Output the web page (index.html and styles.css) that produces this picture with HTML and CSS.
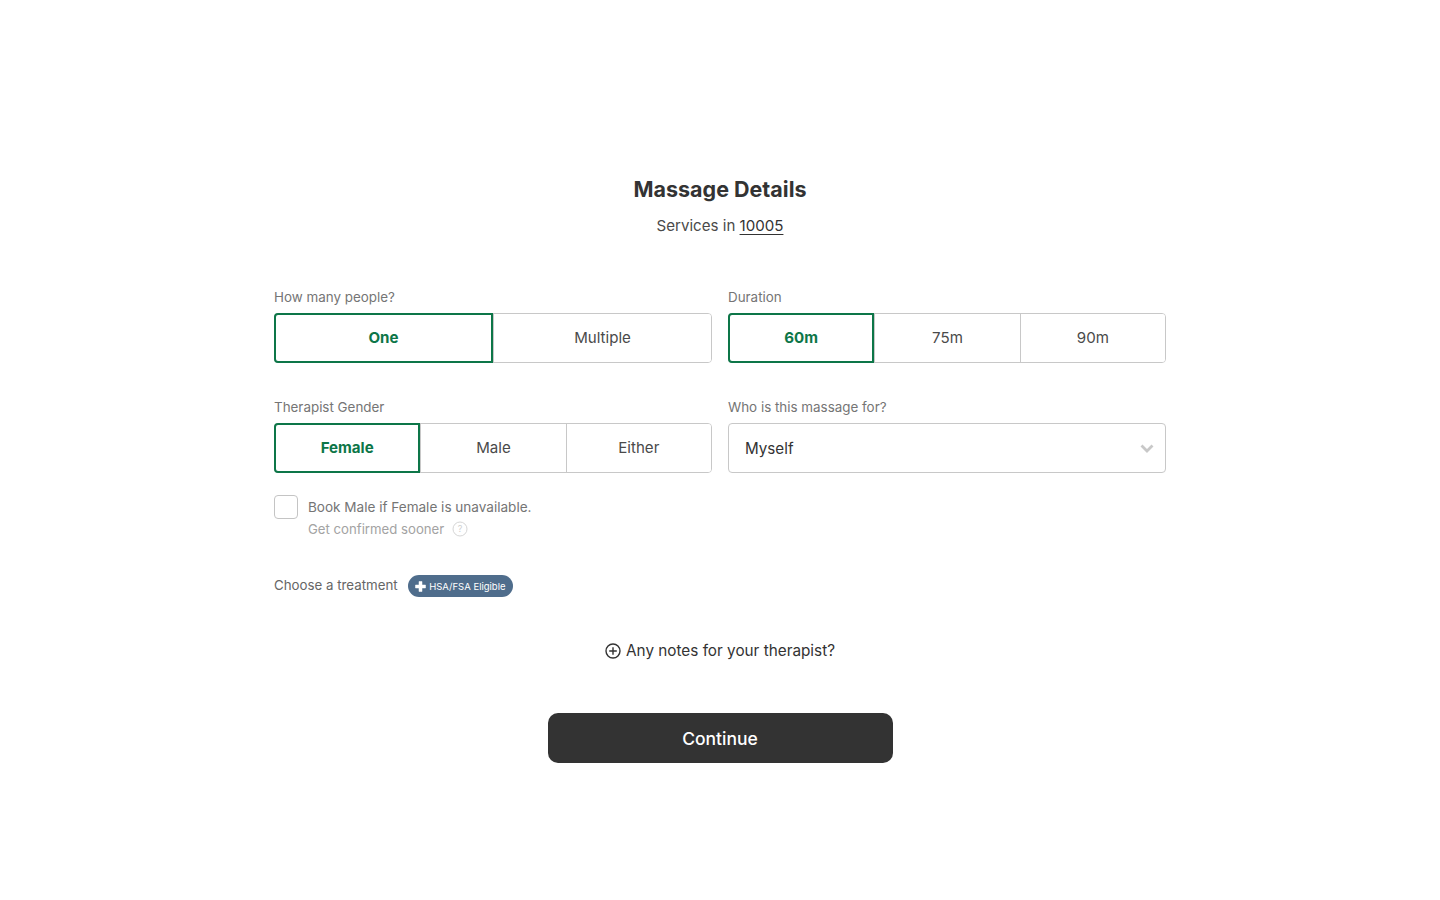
FILE: index.html
```html
<!DOCTYPE html>
<html lang="en">
<head>
<meta charset="utf-8">
<title>Massage Details</title>
<link rel="stylesheet" href="styles.css">
</head>
<body>
<main class="page">
  <header class="head">
    <h1 class="title">Massage Details</h1>
    <p class="sub">Services in <a class="zip" href="#">10005</a></p>
  </header>
  <section class="grid">
    <div class="field">
      <div class="label">How many people?</div>
      <div class="seg">
        <button class="opt on">One</button>
        <button class="opt">Multiple</button>
      </div>
    </div>
    <div class="field">
      <div class="label">Duration</div>
      <div class="seg">
        <button class="opt on">60m</button>
        <button class="opt">75m</button>
        <button class="opt">90m</button>
      </div>
    </div>
    <div class="field">
      <div class="label">Therapist Gender</div>
      <div class="seg">
        <button class="opt on">Female</button>
        <button class="opt">Male</button>
        <button class="opt">Either</button>
      </div>
    </div>
    <div class="field">
      <div class="label">Who is this massage for?</div>
      <div class="select">
        <span>Myself</span>
        <svg class="chev" width="14" height="9" viewBox="0 0 14 9"><path d="M1.500 1.500 7 7l5.500-5.500" fill="none" stroke="#c8c8c8" stroke-width="2.800"/></svg>
      </div>
    </div>
  </section>
  <div class="check">
    <span class="box"></span>
    <div class="check-text">
      <div class="check-main">Book Male if Female is unavailable.</div>
      <div class="check-sub">Get confirmed sooner
        <svg class="help" width="16" height="16" viewBox="0 0 16 16"><circle cx="8" cy="8" r="7" fill="none" stroke="#d6d6d6"/><text x="8" y="11" text-anchor="middle" class="help-q">?</text></svg>
      </div>
    </div>
  </div>
  <div class="treat">
    <span class="treat-label">Choose a treatment</span>
    <span class="pill">
      <svg width="11" height="11" viewBox="0 0 11 11"><path d="M4 .5h3V4h3.500v3H7v3.500H4V7H.5V4H4z" fill="#fff" stroke="#fff" stroke-width=".5" stroke-linejoin="round"/></svg>
      HSA/FSA Eligible
    </span>
  </div>
  <div class="notes">
    <svg width="16" height="16" viewBox="0 0 16 16"><circle cx="8" cy="8" r="7" fill="none" stroke="#333" stroke-width="1.400"/><path d="M8 4.200v7.600M4.200 8h7.600" stroke="#333" stroke-width="1.400"/></svg>
    <span>Any notes for your therapist?</span>
  </div>
  <button class="continue">Continue</button>
</main>
</body>
</html>
```
FILE: styles.css
```css
* { box-sizing: border-box; }
html, body { margin: 0; background: #fff; }
body { font-family: "Inter", "Liberation Sans", sans-serif; color: #333; }
.page { width: 892px; margin: 0 auto; padding-top: 175px; display: flex; flex-direction: column; }
.head { text-align: center; }
.title { margin: 0; font-size: 21.500px; line-height: 28px; font-weight: 700; color: #333; }
.sub { margin: 13px 0 0; font-size: 15.100px; line-height: 20px; color: #4a4a4a; }
.zip { color: #333; text-decoration: underline; text-underline-offset: 3px; }
.grid { display: grid; grid-template-columns: 438px 438px; column-gap: 16px; row-gap: 35px; margin-top: 52px; }
.label { font-size: 13.400px; line-height: 18px; color: #757575; margin-bottom: 7px; }
.seg { display: grid; grid-auto-flow: column; grid-auto-columns: 1fr; height: 50px; border: 1px solid #c8c8c8; border-radius: 4px; }
.opt { min-width: 0; background: #fff; border: 0; border-left: 1px solid #c8c8c8; font: inherit; font-size: 15.100px; color: #4a4a4a; padding: 0 0 2px; }
.opt:first-child { border-left: 0; border-radius: 3px 0 0 3px; }
.opt:last-child { border-radius: 0 3px 3px 0; }
.opt.on { margin: -1px 0 -1px -1px; border: 2px solid #0d7648; border-radius: 4px 0 0 4px; color: #0d7648; font-weight: 700; }
.select { display: flex; align-items: center; justify-content: space-between; height: 50px; padding: 1px 11px 0 16px; border: 1px solid #c8c8c8; border-radius: 4px; font-size: 15.200px; color: #333; }
.chev { margin-top: -1px; }
.check { display: flex; gap: 10px; margin-top: 22px; }
.box { width: 24px; height: 24px; border: 1px solid #c4c4c4; border-radius: 4px; flex: none; }
.check-text { padding-top: 3px; }
.check-main { font-size: 13.550px; line-height: 18px; color: #757575; }
.check-sub { display: flex; align-items: center; gap: 8px; margin-top: 4px; font-size: 13.200px; line-height: 18px; color: #a3a3a3; }
.help-q { font-size: 9px; fill: #cfcfcf; font-family: "Inter", sans-serif; }
.treat { display: flex; align-items: center; gap: 10px; margin-top: 36px; }
.treat-label { font-size: 13.300px; line-height: 22px; color: #666; padding-bottom: 2px; }
.pill { display: inline-flex; align-items: center; gap: 3px; height: 22px; padding: 0 7.500px; border-radius: 11px; background: #4f6d8c; color: #fff; font-size: 9.500px; white-space: nowrap; }
.notes { display: flex; align-items: center; justify-content: center; gap: 5px; margin-top: 43px; font-size: 15.300px; line-height: 20px; color: #333; }
.continue { align-self: center; width: 345px; height: 50px; margin-top: 52px; border: 0; border-radius: 10px; background: #333; color: #fff; font: inherit; font-size: 17.500px; font-weight: 500; }
```
